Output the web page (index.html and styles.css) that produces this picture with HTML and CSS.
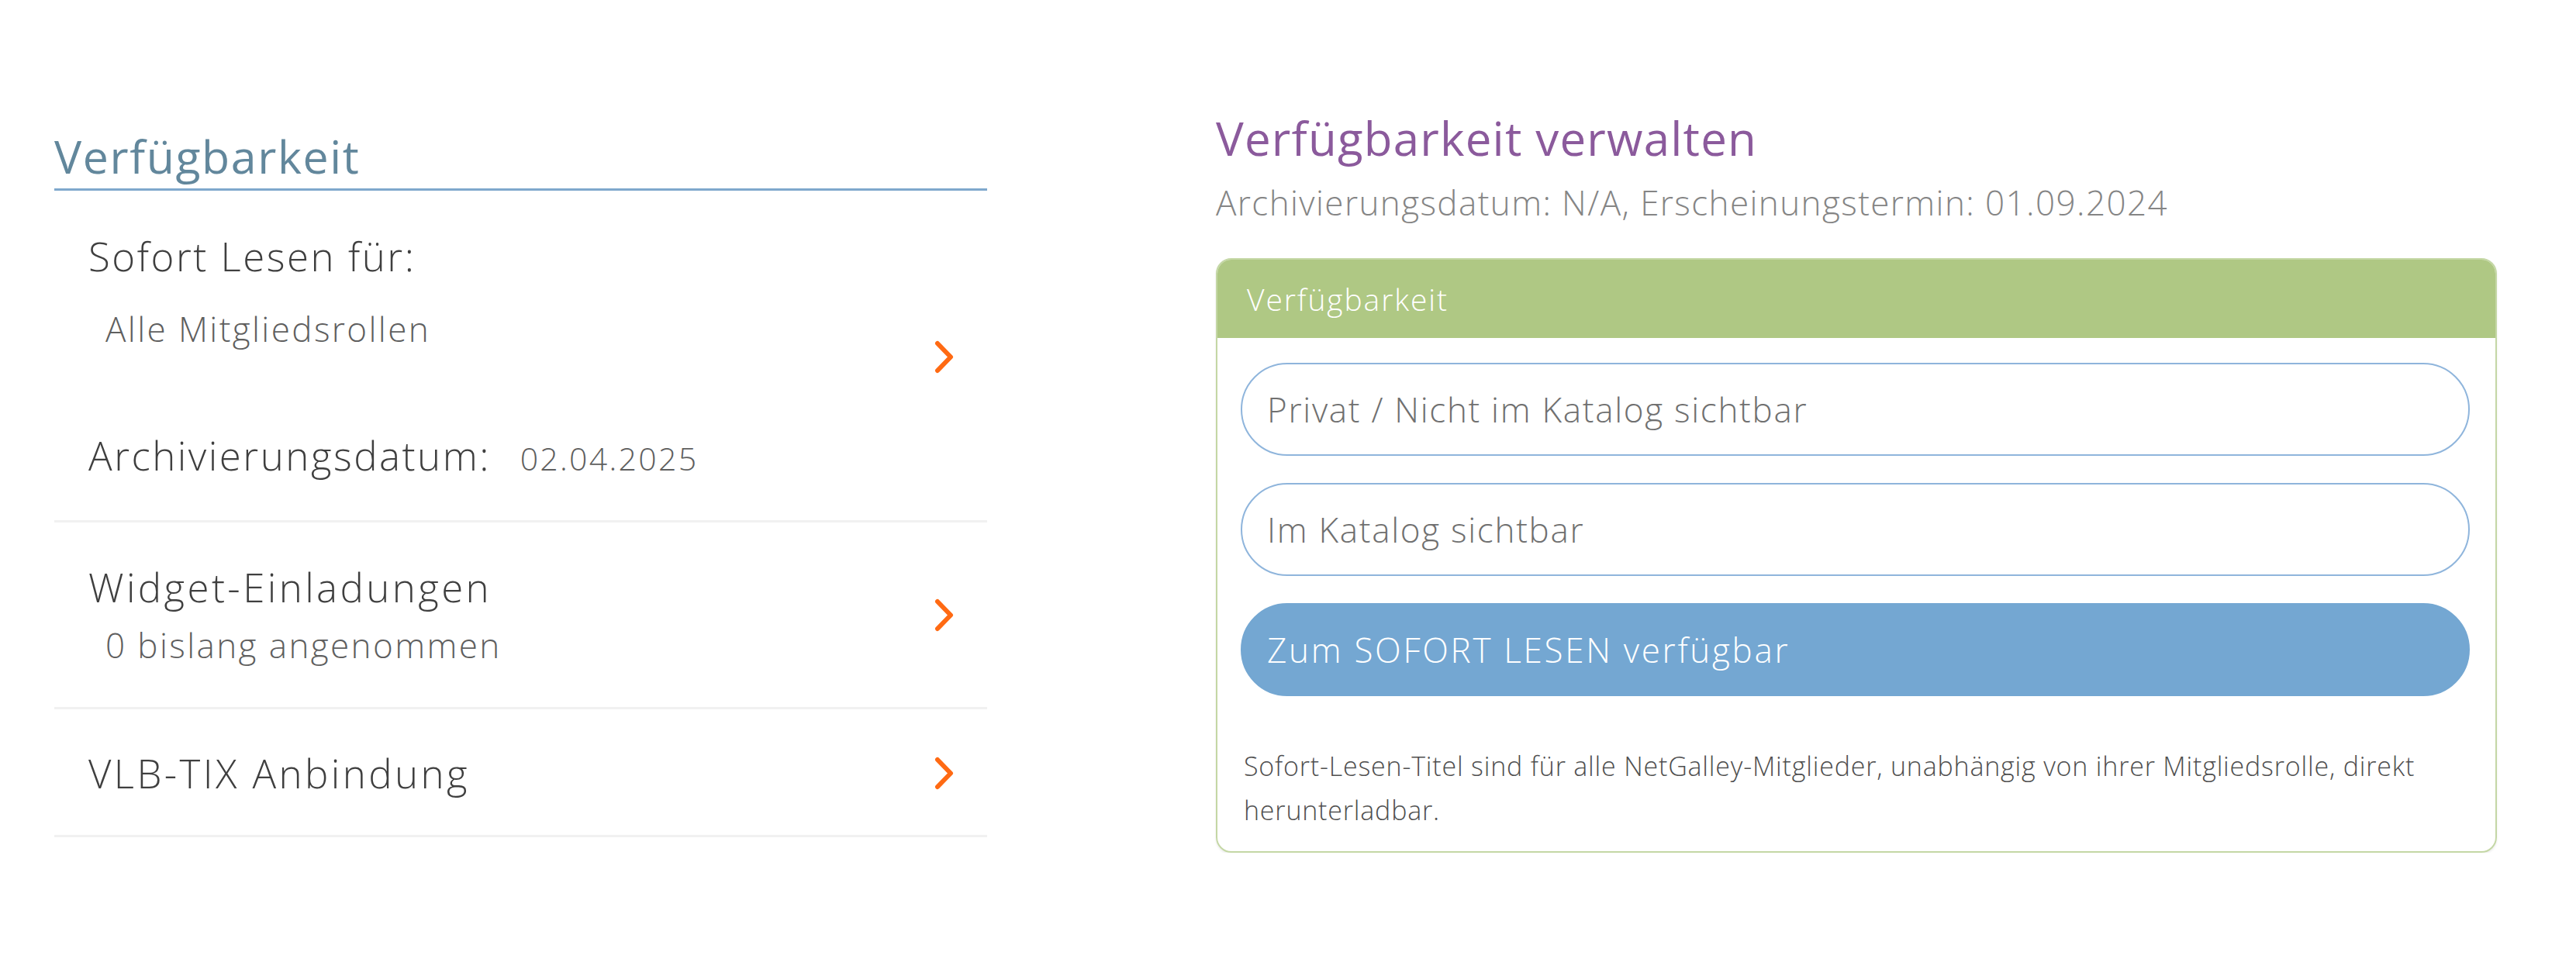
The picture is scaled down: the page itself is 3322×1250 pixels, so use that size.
FILE: index.html
```html
<!DOCTYPE html>
<html lang="de">
<head>
<meta charset="utf-8">
<title>Verfügbarkeit</title>
<link rel="stylesheet" href="styles.css">
</head>
<body>
<div class="page">
  <section class="left">
    <h2 class="left-title">Verfügbarkeit</h2>
    <div class="row row-first">
      <div class="row-text">
        <div class="t">Sofort Lesen für:</div>
        <div class="s s-first">Alle Mitgliedsrollen</div>
        <div class="t t-arch">Archivierungsdatum: <span class="date">02.04.2025</span></div>
      </div>
      <svg class="chev" viewBox="0 0 25 43" width="25" height="43"><polyline points="4,4 21,21.5 4,39" fill="none" stroke="#ff6a13" stroke-width="6" stroke-linecap="round" stroke-linejoin="round"/></svg>
    </div>
    <div class="row row-second">
      <div class="row-text">
        <div class="t t-wide">Widget-Einladungen</div>
        <div class="s s-second">0 bislang angenommen</div>
      </div>
      <svg class="chev" viewBox="0 0 25 43" width="25" height="43"><polyline points="4,4 21,21.5 4,39" fill="none" stroke="#ff6a13" stroke-width="6" stroke-linecap="round" stroke-linejoin="round"/></svg>
    </div>
    <div class="row row-third">
      <div class="row-text">
        <div class="t t-wide">VLB-TIX Anbindung</div>
      </div>
      <svg class="chev" viewBox="0 0 25 43" width="25" height="43"><polyline points="4,4 21,21.5 4,39" fill="none" stroke="#ff6a13" stroke-width="6" stroke-linecap="round" stroke-linejoin="round"/></svg>
    </div>
  </section>
  <section class="right">
    <h2 class="right-title">Verfügbarkeit verwalten</h2>
    <div class="right-sub">Archivierungsdatum: N/A, Erscheinungstermin: 01.09.2024</div>
    <div class="panel">
      <div class="panel-head">Verfügbarkeit</div>
      <div class="panel-body">
        <div class="btn">Privat / Nicht im Katalog sichtbar</div>
        <div class="btn">Im Katalog sichtbar</div>
        <div class="btn btn-fill">Zum SOFORT LESEN verfügbar</div>
        <p class="desc">Sofort-Lesen-Titel sind für alle NetGalley-Mitglieder, unabhängig von ihrer Mitgliedsrolle, direkt<br>herunterladbar.</p>
      </div>
    </div>
  </section>
</div>
</body>
</html>
```

FILE: styles.css
```css
html, body {
  margin: 0;
  padding: 0;
  background: #ffffff;
}

body {
  font-family: "Open Sans", "Liberation Sans", sans-serif;
  font-weight: 300;
}

.page {
  display: flex;
  align-items: flex-start;
  gap: 295px;
  padding: 144px 0 0 70px;
}

/* Left column */
.left {
  width: 1203px;
  padding-top: 23px;
}

.left-title {
  margin: 0;
  font-size: 59px;
  line-height: 68px;
  font-weight: 400;
  color: #62879c;
  letter-spacing: 1.6px;
  padding-bottom: 8px;
  border-bottom: 3px solid #7fa8cc;
}

.row {
  display: flex;
  align-items: center;
  justify-content: space-between;
  padding-left: 44px;
  padding-right: 43px;
  border-bottom: 3px solid #f1f1f1;
}

.row-first {
  padding-top: 56px;
  padding-bottom: 52px;
}

.row-second {
  padding-top: 55px;
  padding-bottom: 55px;
}

.row-third {
  padding-top: 54px;
  padding-bottom: 52px;
}

.t {
  font-size: 51px;
  line-height: 56px;
  color: #3f3f3f;
  letter-spacing: 2.5px;
}

.t-wide {
  letter-spacing: 3.4px;
}

.t-arch {
  margin-top: 110px;
}

.date {
  font-size: 41px;
  color: #5f5f5f;
  margin-left: 22px;
  letter-spacing: 2.3px;
}

.s {
  font-size: 44px;
  line-height: 50px;
  color: #5f5f5f;
  padding-left: 22px;
  letter-spacing: 2.4px;
}

.s-first {
  margin-top: 41px;
}

.s-second {
  margin-top: 22px;
}

.chev {
  display: block;
  flex: none;
}

/* Right column */
.right {
  width: 1652px;
}

.right-title {
  margin: 0;
  font-size: 60px;
  line-height: 68px;
  font-weight: 400;
  color: #8b5a9c;
  letter-spacing: 1.2px;
}

.right-sub {
  margin-top: 24px;
  font-size: 44px;
  line-height: 50px;
  color: #858585;
  letter-spacing: 1.4px;
}

.panel {
  margin-top: 47px;
  border: 2px solid #c4d7a5;
  border-radius: 20px;
  overflow: hidden;
  box-shadow: 0 2px 3px rgba(0, 0, 0, 0.08);
}

.panel-head {
  height: 101px;
  display: flex;
  align-items: center;
  padding-left: 38px;
  background: #afc884;
  color: #ffffff;
  font-size: 39px;
  letter-spacing: 1.9px;
}

.panel-body {
  padding: 32px 33px 24px 30px;
}

.btn {
  box-sizing: border-box;
  height: 120px;
  display: flex;
  align-items: center;
  padding-left: 32px;
  margin-bottom: 35px;
  border: 2px solid #8fb5dc;
  border-radius: 60px;
  font-size: 44px;
  color: #707070;
  letter-spacing: 1.7px;
}

.btn-fill {
  background: #74a7d2;
  border-color: #74a7d2;
  color: #ffffff;
  letter-spacing: 2.7px;
  margin-bottom: 0;
}

.desc {
  margin: 62px 0 0 0;
  padding-left: 4px;
  font-size: 34px;
  line-height: 57px;
  color: #4f4f4f;
  letter-spacing: 0.8px;
  white-space: nowrap;
}
```
